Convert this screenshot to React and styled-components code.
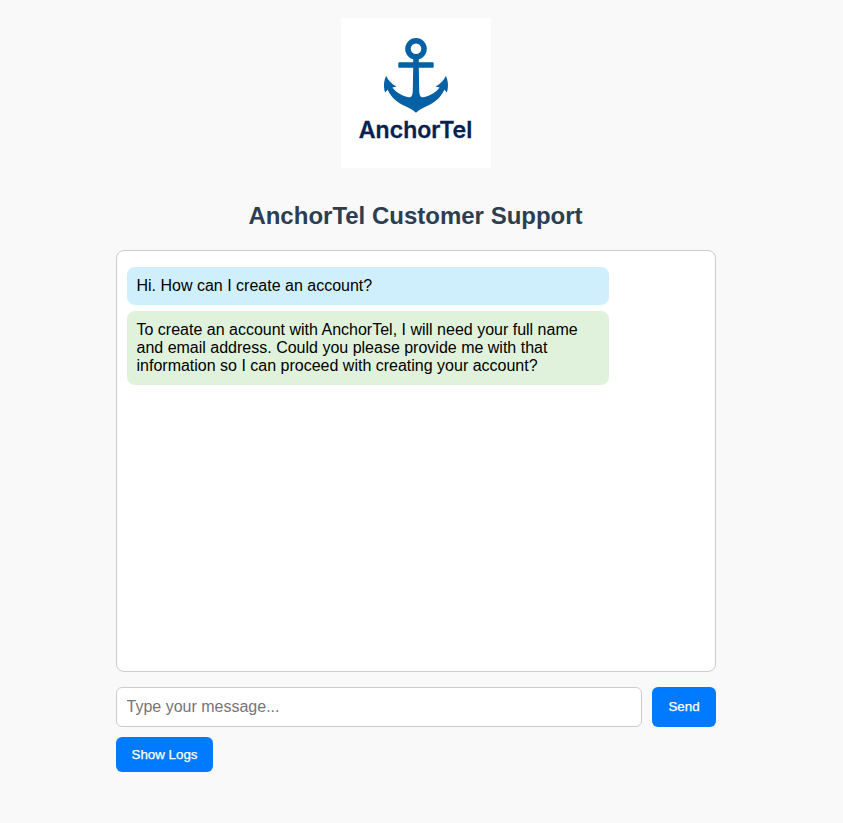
import React, { useState } from 'react';
import styled, { createGlobalStyle } from 'styled-components';

const GlobalStyle = createGlobalStyle`
  body {
    margin: 0;
    background: #f9f9f9;
    font-family: Arial, "Liberation Sans", sans-serif;
    font-size: 16px;
    color: #000;
  }
`;

const Page = styled.main`
  box-sizing: border-box;
  width: 600px;
  min-height: 823px;
  margin-left: 115.5px;
  padding-top: 18px;
`;

const Logo = styled.svg`
  display: block;
  width: 150px;
  height: 150px;
  margin: 0 auto;
  background: #fff;
`;

const Title = styled.h1`
  margin: 34px 0 20px;
  font-size: 24px;
  line-height: 28px;
  text-align: center;
  white-space: nowrap;
  color: #2c3e50;
`;

const ChatBox = styled.section`
  box-sizing: border-box;
  height: 422px;
  padding: 16px 10px 10px;
  border: 1px solid #ccc;
  border-radius: 8px;
  background: #fff;
  display: flex;
  flex-direction: column;
  align-items: flex-start;
  gap: 6px;
  overflow-y: auto;
`;

const Message = styled.div`
  box-sizing: border-box;
  width: 482px;
  padding: 10px;
  border-radius: 8px;
  line-height: 18px;
  background: ${({ $from }) => ($from === 'user' ? '#d0effd' : '#e0f2db')};
`;

const Composer = styled.form`
  display: flex;
  gap: 10px;
  margin: 15px 0 10px;
`;

const MessageInput = styled.input`
  box-sizing: border-box;
  flex: 1;
  min-width: 0;
  height: 40px;
  padding: 10px;
  border: 1px solid #ccc;
  border-radius: 6px;
  background: #fff;
  font: inherit;
  outline: none;

  &::placeholder {
    color: #757575;
  }
`;

const Button = styled.button`
  box-sizing: border-box;
  width: ${({ $width }) => $width}px;
  min-height: 35px;
  padding: 0 0 1px 1px;
  border: 0;
  border-radius: 6px;
  background: #007bff;
  color: #fff;
  font-family: inherit;
  font-size: 13.333px;
  -webkit-text-stroke: 0.25px #fff;
  white-space: nowrap;
  cursor: pointer;
`;

const messages = [
  { from: 'user', text: 'Hi. How can I create an account?' },
  {
    from: 'bot',
    text: 'To create an account with AnchorTel, I will need your full name and email address. Could you please provide me with that information so I can proceed with creating your account?',
  },
];

function AnchorLogo() {
  return (
    <Logo viewBox="0 0 150 150" role="img" aria-label="AnchorTel">
      <g fill="#0660a4">
        <path
          fillRule="evenodd"
          d="M75 20a10.8 10.8 0 1 0 0 21.6A10.8 10.8 0 0 0 75 20Zm0 5.5a5.3 5.3 0 1 1 0 10.6 5.3 5.3 0 0 1 0-10.6Z"
        />
        <path d="M72.200 40h5.600v4.300h14a.9.9 0 0 1 .9.9v3.600a.9.9 0 0 1-.9.9H77.800L78.200 72C78.200 77 79.500 79.800 82 79.200C88.500 78 95 74.500 98.600 69.400L94.500 68.400C98.700 66.500 102.500 63 104.800 58C107 62 107.800 68 106 74.500L103.300 71.800C99.500 80 93.500 84.800 86 88C81 90.300 77.500 92.300 75 94.700C72.500 92.300 69 90.300 64 88C56.500 84.800 50.500 80 46.700 71.800L44 74.500C42.200 68 43 62 45.200 58C47.500 63 51.300 66.500 55.500 68.400L51.400 69.400C55 74.500 61.500 78 68 79.200C70.500 79.800 71.800 77 71.800 72L72.200 49.700H58.200a.9.9 0 0 1-.9-.9v-3.600a.9.9 0 0 1 .9-.9h14Z" />
      </g>
      <text
        x="17.800"
        y="119.800"
        textLength="113.500"
        lengthAdjust="spacingAndGlyphs"
        fontFamily="Inter, sans-serif"
        fontSize="22.500"
        fontWeight="600"
        fill="#06214f"
        stroke="#06214f"
        strokeWidth="0.300"
      >
        AnchorTel
      </text>
    </Logo>
  );
}

export default function App() {
  const [draft, setDraft] = useState('');

  return (
    <>
      <GlobalStyle />
      <Page>
        <AnchorLogo />
        <Title>AnchorTel Customer Support</Title>
        <ChatBox>
          {messages.map((message) => (
            <Message key={message.text} $from={message.from}>
              {message.text}
            </Message>
          ))}
        </ChatBox>
        <Composer onSubmit={(event) => event.preventDefault()}>
          <MessageInput
            value={draft}
            onChange={(event) => setDraft(event.target.value)}
            placeholder="Type your message..."
          />
          <Button type="submit" $width={64}>Send</Button>
        </Composer>
        <Button type="button" $width={97}>Show Logs</Button>
      </Page>
    </>
  );
}
